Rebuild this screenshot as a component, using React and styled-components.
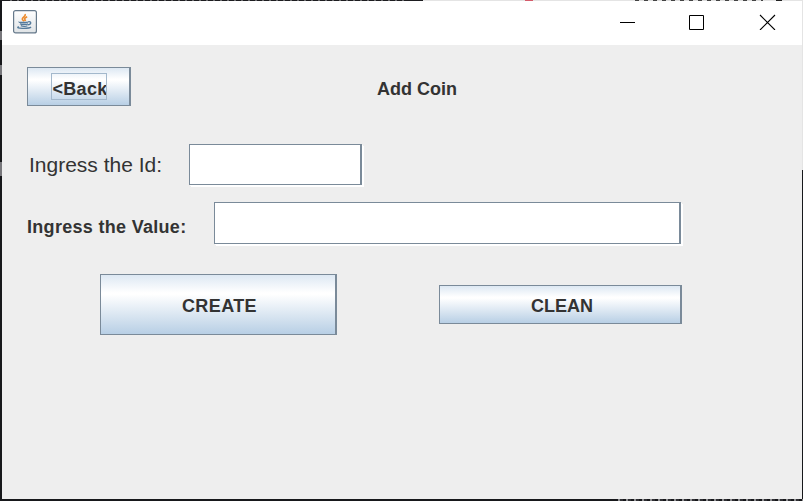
import React from "react";
import styled, { createGlobalStyle } from "styled-components";

const GlobalStyle = createGlobalStyle`
  * { box-sizing: border-box; }
  html, body { margin: 0; padding: 0; overflow: hidden; }
`;

/* The strip of desktop visible around the window, with slivers of the text behind it. */
const Desktop = styled.div`
  width: 803px;
  height: 501px;
  padding: 1px 1px 2px 2px;
  background:
    repeating-linear-gradient(90deg, #17181b 0 3px, #8d8d90 3px 5px, #303034 5px 8px) 615px 100% / 188px 2px no-repeat,
    linear-gradient(#77777b, #77777b) 0 31px / 2px 9px no-repeat,
    linear-gradient(#77777b, #77777b) 0 65px / 2px 10px no-repeat,
    linear-gradient(#77777b, #77777b) 0 162px / 2px 14px no-repeat,
    linear-gradient(90deg, #d45b6a, #d45b6a) 525px 0 / 8px 1px no-repeat,
    repeating-linear-gradient(90deg, #444 0 4px, #ddd 4px 9px) 635px 0 / 128px 1px no-repeat,
    linear-gradient(#222, #222) 776px 0 / 6px 1px no-repeat,
    repeating-linear-gradient(90deg, #1d1d20 0 5px, #6b6b6e 5px 7px) 5px 0 / 400px 1px no-repeat,
    linear-gradient(90deg, #1d1d20 0 423px, #e4e4e4 423px) top / 100% 1px no-repeat,
    linear-gradient(#e4e4e4 0 170px, #17181b 170px) 100% 0 / 1px 100% no-repeat,
    #17181b;
  font-family: "Liberation Sans", Arial, sans-serif;
  color: #333;
`;

const Window = styled.main`
  display: flex;
  flex-direction: column;
  height: 498px;
  background: #eeeeee;
`;

const TitleBar = styled.header`
  display: flex;
  justify-content: space-between;
  height: 44px;
  background: #fff;
  padding: 9px 26px 0 11px;
`;

const Controls = styled.div`
  display: flex;
  gap: 54px;
  padding-top: 4px;
  svg { display: block; }
  svg:last-child { margin-left: 1px; }
`;

const Content = styled.form`
  display: flex;
  flex-direction: column;
  align-items: flex-start;
  padding: 22px 0 0 25px;
`;

const Row = styled.div`
  display: flex;
  align-items: flex-start;
  height: ${(p) => p.$height}px;
  margin-left: ${(p) => p.$indent || 0}px;
  gap: ${(p) => p.$gap || 0}px;
`;

const Label = styled.label`
  width: ${(p) => p.$width}px;
  padding-top: ${(p) => p.$drop}px;
  font-size: ${(p) => (p.$plain ? 21 : 18)}px;
  font-weight: ${(p) => (p.$plain ? 400 : 700)};
  line-height: 24px;
  letter-spacing: ${(p) => p.$tracking || 0}px;
  white-space: nowrap;
`;

const Title = styled(Label).attrs({ as: "h1" })`
  margin: 0;
`;

const MetalButton = styled.button`
  display: flex;
  align-items: center;
  justify-content: center;
  width: ${(p) => p.$width}px;
  height: ${(p) => p.$height}px;
  margin-top: ${(p) => p.$drop || 0}px;
  padding: 2px 0 0 ${(p) => p.$inset || 0}px;
  border: 1px solid #7a8a99;
  border-right-width: 2px;
  border-radius: 0;
  background: linear-gradient(#dde8f3 0%, #fff 30%, #fff 33%, #b8cfe5 100%);
  font: 700 18px/24px "Liberation Sans", Arial, sans-serif;
  letter-spacing: ${(p) => p.$tracking || 0}px;
  color: #333;
`;

const FocusRing = styled.span`
  width: 56px;
  height: 27px;
  margin: -2px 0 0;
  padding: 3px 0 0 1px;
  border: 1px solid #a3b8cc;
  overflow: hidden;
  text-align: left;
  white-space: nowrap;
`;

const Field = styled.input`
  width: ${(p) => p.$width}px;
  height: ${(p) => p.$height}px;
  padding: 0 5px;
  border: 1px solid #7a8a99;
  border-right-width: 2px;
  border-radius: 0;
  outline: none;
  background: #fff;
  box-shadow: 1px 1px 0 #fff, 2px 2px 0 #fff;
  font: 18px "Liberation Sans", Arial, sans-serif;
`;

const JavaIcon = () => (
  <svg width="24" height="24" viewBox="0 0 24 24" fill="none">
    <defs>
      <linearGradient id="tile" x2="0" y2="1">
        <stop stopColor="#fff" />
        <stop offset="1" stopColor="#dfe3e6" />
      </linearGradient>
    </defs>
    <rect x=".6" y=".6" width="22.8" height="22.3" rx="2" fill="url(#tile)" stroke="#66798b" strokeWidth="1.2" />
    <path d="M12.2 4c.9 2.7-4.3 3.6-2.6 5.8l1.4 1.5M14.2 6.7c-3.6 1.3-2.5 2.5-1.7 4.3" stroke="#ed8b2d" strokeWidth="1.6" />
    <path d="M6.2 11.8c-1 .9 8 1 8.8 0M7 13.7c1.5 1 6.5 1 8 0M7.8 15.7c1.6.8 5.2.8 6.6 0M15.2 11.7c3.5-.5 3.4 2.7-.4 3.2M5.8 16.7c-5.3 2.1 10.7 2.3 12.2.3" stroke="#547a9b" strokeWidth="1.3" />
  </svg>
);

export default function App() {
  return (
    <Desktop>
      <GlobalStyle />
      <Window>
        <TitleBar>
          <JavaIcon />
          <Controls>
            <svg width="15" height="15" stroke="#000"><path d="M0 8.5h15" /></svg>
            <svg width="15" height="16" fill="none" stroke="#000"><path d="M.5 1.5h14v14H.5z" /></svg>
            <svg width="17" height="16" stroke="#000"><path d="M1 1l15 15M16 1L1 16" strokeWidth="1.1" /></svg>
          </Controls>
        </TitleBar>
        <Content>
          <Row $height={77} $gap={246}>
            <MetalButton type="button" $width={104} $height={39} $tracking={0.3}>
              <FocusRing>&lt;Back</FocusRing>
            </MetalButton>
            <Title $drop={10}>Add Coin</Title>
          </Row>
          <Row $height={58} $indent={2}>
            <Label htmlFor="coin-id" $plain $width={160} $drop={9}>Ingress the Id:</Label>
            <Field id="coin-id" $width={173} $height={41} />
          </Row>
          <Row $height={72}>
            <Label htmlFor="coin-value" $width={187} $drop={13} $tracking={0.3}>Ingress the Value:</Label>
            <Field id="coin-value" $width={467} $height={42} />
          </Row>
          <Row $height={61} $indent={73} $gap={102}>
            <MetalButton type="button" $width={237} $height={61} $inset={3} $tracking={0.4}>CREATE</MetalButton>
            <MetalButton type="button" $width={243} $height={39} $drop={11} $inset={4}>CLEAN</MetalButton>
          </Row>
        </Content>
      </Window>
    </Desktop>
  );
}
